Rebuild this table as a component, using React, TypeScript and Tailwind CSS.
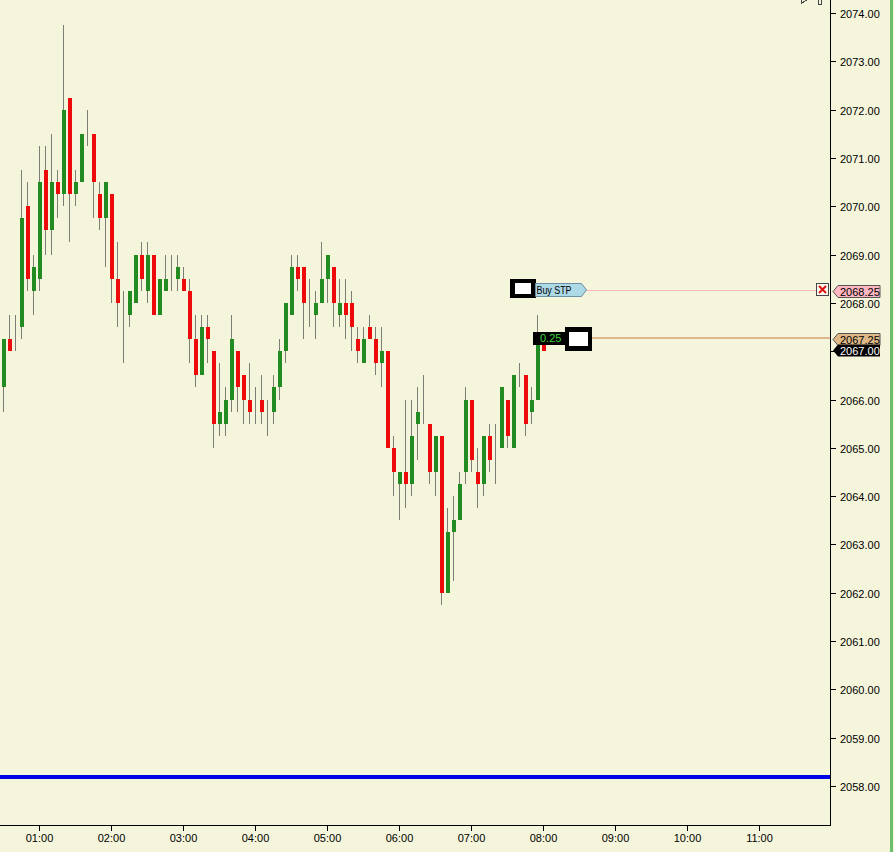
// 5 minute candles, open/high/low/close
type Bar = [number, number, number, number];

const bars: Bar[] = [
  [2066.25, 2067.25, 2065.75, 2067.25],
  [2067.25, 2067.75, 2067.0, 2067.0],
  [2067.25, 2067.75, 2067.0, 2067.25],
  [2067.5, 2070.75, 2067.25, 2069.75],
  [2070.0, 2070.5, 2068.25, 2068.5],
  [2068.25, 2069.0, 2067.75, 2068.75],
  [2068.5, 2071.25, 2068.25, 2070.5],
  [2070.75, 2071.25, 2069.0, 2069.5],
  [2069.5, 2071.5, 2069.0, 2070.5],
  [2070.5, 2070.75, 2069.75, 2070.25],
  [2070.25, 2073.75, 2070.0, 2072.0],
  [2072.25, 2072.25, 2069.25, 2070.25],
  [2070.25, 2070.75, 2070.0, 2070.5],
  [2070.5, 2071.5, 2070.5, 2071.5],
  [2071.25, 2072.0, 2071.25, 2071.25],
  [2071.5, 2071.5, 2069.75, 2070.5],
  [2070.25, 2070.5, 2069.5, 2069.75],
  [2069.75, 2070.5, 2068.75, 2070.5],
  [2070.25, 2070.25, 2068.0, 2068.5],
  [2068.5, 2069.25, 2067.5, 2068.0],
  [2068.0, 2068.25, 2066.75, 2068.0],
  [2067.75, 2068.25, 2067.5, 2068.25],
  [2068.0, 2069.0, 2068.0, 2069.0],
  [2069.0, 2069.25, 2068.25, 2068.5],
  [2068.25, 2069.25, 2068.0, 2069.0],
  [2069.0, 2069.0, 2067.75, 2067.75],
  [2067.75, 2068.5, 2067.75, 2068.5],
  [2068.25, 2069.0, 2068.25, 2068.5],
  [2068.5, 2069.0, 2068.25, 2068.5],
  [2068.5, 2069.0, 2068.25, 2068.75],
  [2068.5, 2068.75, 2068.25, 2068.25],
  [2068.25, 2068.5, 2066.75, 2067.25],
  [2067.25, 2067.75, 2066.25, 2066.5],
  [2066.5, 2067.75, 2066.5, 2067.5],
  [2067.5, 2067.75, 2066.75, 2067.25],
  [2067.0, 2067.0, 2065.0, 2065.5],
  [2065.5, 2066.75, 2065.25, 2065.75],
  [2065.5, 2066.25, 2065.25, 2066.0],
  [2066.0, 2067.75, 2065.75, 2067.25],
  [2067.0, 2067.0, 2065.75, 2066.25],
  [2066.5, 2066.5, 2065.5, 2066.0],
  [2066.0, 2066.75, 2065.5, 2065.75],
  [2065.75, 2066.25, 2065.5, 2065.75],
  [2066.0, 2066.5, 2065.5, 2065.75],
  [2065.75, 2066.0, 2065.25, 2065.75],
  [2065.75, 2066.5, 2065.5, 2066.25],
  [2066.25, 2067.25, 2066.0, 2067.0],
  [2067.0, 2068.0, 2066.75, 2068.0],
  [2067.75, 2069.0, 2067.75, 2068.75],
  [2068.75, 2069.0, 2068.25, 2068.5],
  [2068.75, 2068.75, 2067.25, 2068.0],
  [2068.0, 2068.5, 2067.5, 2068.0],
  [2067.75, 2068.25, 2067.25, 2068.0],
  [2068.0, 2069.25, 2068.0, 2068.5],
  [2068.5, 2069.0, 2068.0, 2069.0],
  [2068.75, 2068.75, 2067.5, 2068.0],
  [2067.75, 2068.5, 2067.5, 2068.0],
  [2068.0, 2068.5, 2067.25, 2067.75],
  [2068.0, 2068.25, 2067.0, 2067.5],
  [2067.25, 2067.5, 2066.75, 2067.0],
  [2066.75, 2067.5, 2066.75, 2067.25],
  [2067.5, 2067.75, 2067.25, 2067.25],
  [2067.25, 2067.5, 2066.5, 2066.75],
  [2066.75, 2067.5, 2066.25, 2067.0],
  [2067.0, 2067.0, 2065.0, 2065.0],
  [2065.0, 2065.25, 2064.0, 2064.5],
  [2064.25, 2064.5, 2063.5, 2064.5],
  [2064.5, 2066.0, 2063.75, 2064.25],
  [2064.25, 2066.0, 2064.0, 2065.25],
  [2065.5, 2066.25, 2064.75, 2065.75],
  [2065.75, 2066.5, 2065.5, 2065.75],
  [2065.5, 2065.5, 2064.25, 2064.5],
  [2064.5, 2065.25, 2064.0, 2065.25],
  [2065.25, 2065.25, 2061.75, 2062.0],
  [2062.0, 2063.75, 2062.0, 2063.25],
  [2063.25, 2064.0, 2062.25, 2063.5],
  [2063.5, 2064.5, 2063.5, 2064.25],
  [2064.5, 2066.25, 2064.25, 2066.0],
  [2066.0, 2066.0, 2064.5, 2064.75],
  [2064.5, 2065.0, 2063.75, 2064.25],
  [2064.25, 2065.25, 2064.0, 2065.25],
  [2065.25, 2065.5, 2064.5, 2064.75],
  [2065.0, 2065.5, 2064.25, 2065.0],
  [2065.0, 2066.25, 2065.0, 2066.25],
  [2066.0, 2066.0, 2065.0, 2065.25],
  [2065.0, 2066.5, 2065.0, 2066.5],
  [2066.5, 2066.75, 2066.25, 2066.5],
  [2066.5, 2066.5, 2065.25, 2065.5],
  [2065.75, 2066.25, 2065.5, 2066.0],
  [2066.0, 2067.75, 2066.0, 2067.25],
  [2067.25, 2067.25, 2067.0, 2067.0],
];

const PLOT_W = 831;
const PLOT_H = 825;
const TOP_PRICE = 2074;
const PX_PER_POINT = 48.3125;

const y = (p: number) => Math.round(13 + (TOP_PRICE - p) * PX_PER_POINT);
const barX = (i: number) => 2 + i * 6;

const priceLevels = Array.from({ length: 17 }, (_, i) => TOP_PRICE - i);
const hours = Array.from({ length: 11 }, (_, i) => i + 1);

function AxisTag({ price, fill, text, color }: { price: number; fill: string; text: string; color: string }) {
  const cy = y(price) + 0.5;
  return (
    <g>
      <polygon
        points={`2,${cy} 7,${cy - 6} 49,${cy - 6} 49,${cy + 6} 7,${cy + 6}`}
        fill={fill}
        stroke="#555"
        strokeWidth={1}
      />
      <text x={9} y={cy + 4} fill={color}>
        {text}
      </text>
    </g>
  );
}

export default function App() {
  return (
    <div className="relative flex h-[852px] w-[894px] overflow-hidden bg-[#f5f5dc] font-['Liberation_Sans',Arial,sans-serif] text-[11px]">
      {/* plot + time axis */}
      <svg width={PLOT_W} height={852} className="shrink-0" shapeRendering="crispEdges">
        {bars.map(([o, h, l, c], i) => {
          const x = barX(i);
          const top = y(Math.max(o, c));
          const bottom = y(Math.min(o, c));
          return (
            <g key={i}>
              <rect x={x + 1} y={y(h)} width={1} height={Math.max(1, y(l) - y(h))} fill="#7d7d78" />
              {o !== c && (
                <rect x={x} y={top} width={4} height={bottom - top} fill={c > o ? '#228b22' : '#ee0a0a'} />
              )}
            </g>
          );
        })}

        {/* horizontal line */}
        <rect x={0} y={775} width={PLOT_W} height={4} fill="#0000e8" />

        {/* order lines */}
        <line x1={586} x2={816} y1={290.5} y2={290.5} stroke="#ffb6c1" strokeWidth={1} />
        <line x1={592} x2={PLOT_W} y1={338} y2={338} stroke="#dcb88c" strokeWidth={2} />

        {/* cut-off toolbar icons */}
        <path d="M801.5 -4 V3.5 L808 -1" fill="none" stroke="#444" strokeWidth={1} />
        <rect x={818.5} y={-3} width={3} height={7} fill="none" stroke="#444" strokeWidth={1} />

        {/* axes */}
        <line x1={PLOT_W - 0.5} x2={PLOT_W - 0.5} y1={0} y2={PLOT_H + 1} stroke="#000" />
        <line x1={0} x2={PLOT_W} y1={PLOT_H + 0.5} y2={PLOT_H + 0.5} stroke="#000" />
        {hours.map((h) => {
          const tx = 39.5 + (h - 1) * 72;
          return (
            <g key={h}>
              <line x1={tx} x2={tx} y1={PLOT_H} y2={PLOT_H + 6} stroke="#000" />
              <text x={tx} y={842} textAnchor="middle" fill="#000" shapeRendering="auto">
                {`${String(h).padStart(2, '0')}:00`}
              </text>
            </g>
          );
        })}
      </svg>

      {/* price axis */}
      <svg width={59} height={852} className="shrink-0">
        {priceLevels.map((p) => (
          <g key={p}>
            <line x1={0} x2={5} y1={y(p) + 0.5} y2={y(p) + 0.5} stroke="#000" shapeRendering="crispEdges" />
            <text x={9} y={y(p) + 4.5} fill="#000">
              {p.toFixed(2)}
            </text>
          </g>
        ))}
        <AxisTag price={2068.25} fill="#ffb6c1" text="2068.25" color="#000" />
        <AxisTag price={2067.25} fill="#deb887" text="2067.25" color="#000" />
        <g>
          <polygon points="2,350.5 7,344.5 49,344.5 49,356.5 7,356.5" fill="#000" />
          <text x={9} y={354.5} fill="#fff">
            2067.00
          </text>
        </g>
      </svg>

      <div className="h-full w-[3px] shrink-0 bg-[#6ebe6e]" />

      {/* Buy STP order */}
      <div className="absolute left-[510px] top-[279px] h-[19px] w-[26px] border-x-[5px] border-y-[4px] border-black bg-white" />
      <svg className="absolute left-[535px] top-[283px]" width={53} height={15}>
        <polygon points="0.5,0.5 46.5,0.5 51.5,7 46.5,13.5 0.5,13.5" fill="#add8e6" stroke="#6b8fa3" />
        <text x={1.5} y={11} fill="#000" textLength={35} lengthAdjust="spacingAndGlyphs">
          Buy STP
        </text>
      </svg>
      <div className="absolute left-[816px] top-[283px] flex h-[13px] w-[13px] items-center justify-center border border-[#444] bg-[#fbfbf0]">
        <svg width={9} height={9} viewBox="0 0 9 9">
          <path d="M1 1 L8 8 M8 1 L1 8" stroke="#e01010" strokeWidth={2} />
        </svg>
      </div>

      {/* position */}
      <div className="absolute left-[533px] top-[332px] flex h-[13px] w-[33px] items-center bg-black pl-[7px] leading-none text-[#3ad43a]">
        0.25
      </div>
      <div className="absolute left-[565px] top-[327px] h-[24px] w-[27px] border-x-[4px] border-y-[5px] border-black bg-white" />
    </div>
  );
}
